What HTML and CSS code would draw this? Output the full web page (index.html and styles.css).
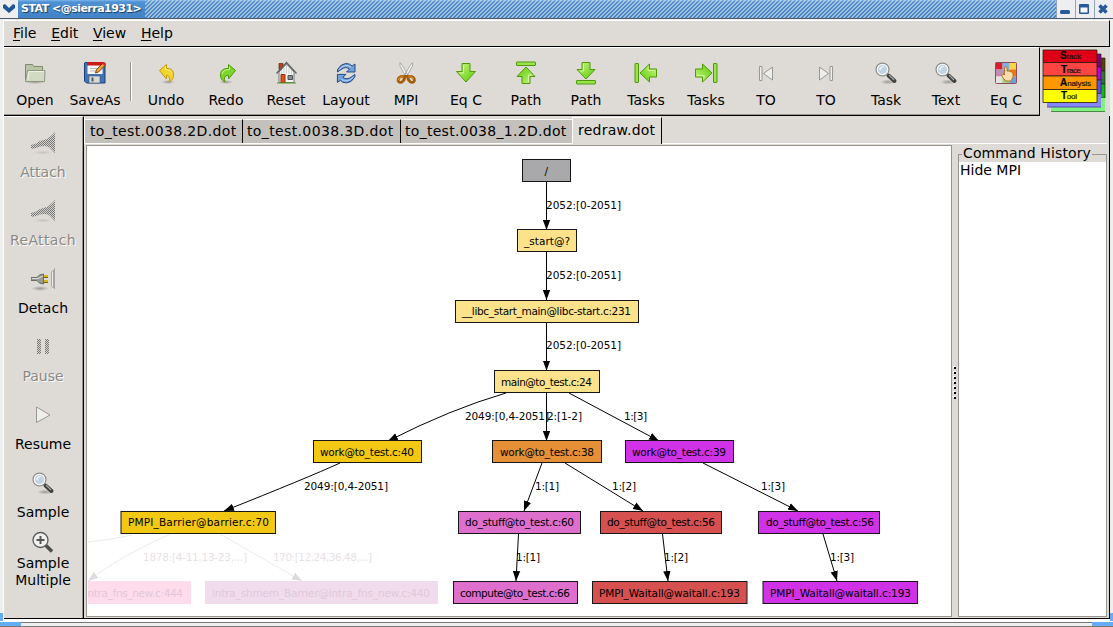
FILE: index.html
```html
<!DOCTYPE html>
<html lang="en">
<head>
<meta charset="utf-8">
<title>STAT</title>
<link rel="stylesheet" href="styles.css">
</head>
<body>
<svg class="defs" width="0" height="0">
  <defs>
    <linearGradient id="green" x1="0" y1="0" x2="1" y2="1"><stop offset="0" stop-color="#d0f58e"/><stop offset=".6" stop-color="#86dc35"/><stop offset="1" stop-color="#65c71b"/></linearGradient>
    <radialGradient id="shade"><stop offset="0" stop-color="#000" stop-opacity=".3"/><stop offset="1" stop-color="#000" stop-opacity="0"/></radialGradient>
    <pattern id="dither" width="2" height="2" patternUnits="userSpaceOnUse"><rect width="2" height="2" fill="#d5d3cf"/><path d="M0 0h1v1H0zM1 1h1v1H1z" fill="#777"/></pattern>
    <symbol id="down" viewBox="0 0 24 24"><path d="M8 2.500h8v8h5.500L12 21 2.500 10.500H8z" fill="url(#green)" stroke="#4e9a06"/><path d="M9.500 4v8H6" fill="none" stroke="#d6f7a4"/></symbol>
    <symbol id="bardown" viewBox="0 0 24 24"><path d="M8 1.500h8v7h5L12 18 3 8.500h5z" fill="url(#green)" stroke="#4e9a06"/><path d="M9.500 3v7H6.500" fill="none" stroke="#d6f7a4"/><rect x="2.500" y="19.500" width="19" height="3.500" rx=".5" fill="#9ae34f" stroke="#4e9a06"/></symbol>
    <symbol id="lens" viewBox="0 0 24 24"><ellipse cx="14" cy="21" rx="8" ry="2.500" fill="url(#shade)"/><path d="M14.500 14.500l6 5.500" stroke="#3d403d" stroke-width="4" stroke-linecap="round"/><path d="M15 14l5 5" stroke="#a5a8a3" stroke-width="1.200"/><circle cx="8.500" cy="8.500" r="6.400" fill="#c2d3e2" stroke="#878a86" stroke-width="1.300"/><circle cx="8.500" cy="8.500" r="5.200" fill="none" stroke="#f4f4f4" stroke-width="1.300"/><path d="M5 8.500c1-4 5-4 6-3-2 0-4 1-4.500 4z" fill="#eef4f8"/></symbol>
    <symbol id="plugoff" viewBox="0 0 24 24"><ellipse cx="12" cy="21.500" rx="9" ry="2" fill="url(#shade)" opacity=".4"/><path d="M0 14L5 12.500 9 10 14 8.500 17 7.500 21 4 24 1V22L21 19 18 16 14 15 9 15.500 5 17 0 18z" fill="url(#dither)"/></symbol>
    <symbol id="start" viewBox="0 0 24 24"><path d="M5.500 5.500h2.500v14H5.500zM18.500 6v13L9.500 12.500z" fill="#eeeeec" stroke="#969894"/></symbol>
  </defs>
</svg>
<div class="window">
  <header class="titlebar">
    <svg class="winmenu" viewBox="0 0 18 18"><path d="M3 5l2-1 4 4 4-4 2 1v3l-6 5-6-5z" fill="#1f5698"/></svg>
    <span class="title">STAT &lt;@sierra1931&gt;</span><i class="stripes"></i>
    <svg class="winbtns" viewBox="0 0 57 18"><path d="M0 0h57v18H0z" fill="#eeeef1"/><path d="M.5 0v18M19.500 0v18M38.500 0v18" stroke="#91a4bc"/><rect x="4" y="10" width="10" height="4" rx="1.500" fill="#265b99"/><path d="M24 4h8q1 0 1 1v8q0 1-1 1h-8q-1 0-1-1V5q0-1 1-1z" fill="#265b99"/><path d="M24.500 7.500h7v5h-7z" fill="#f7f7fb"/><path d="M43.500 5.500l7 7M50.500 5.500l-7 7" stroke="#265b99" stroke-width="3.500"/></svg>
  </header>
  <div class="frame">
    <nav class="menubar"><span><u>F</u>ile</span><span><u>E</u>dit</span><span><u>V</u>iew</span><span><u>H</u>elp</span></nav>
    <div class="toprow">
      <div class="toolbar">
        <div class="tool"><svg viewBox="0 0 24 24"><ellipse cx="12" cy="21" rx="11" ry="2" fill="url(#shade)"/><path d="M2.500 19.500V3.500h7l1.500 2h8.500v14z" fill="#b9c4a4" stroke="#808c6e"/><path d="M2.500 20.500L4.500 9.500H22l-.5 11z" fill="#d3dac4" stroke="#8e997c"/><path d="M5 19l1-8.500h15" fill="none" stroke="#edf0e5"/></svg><span>Open</span></div>
        <div class="tool"><svg viewBox="0 0 24 24"><path d="M2 1.500h18.500q1.500 0 1.500 1.500v19H3.500L1.500 20V2z" fill="#4274b6" stroke="#173f7c"/><path d="M4.500 2h15v11h-15z" fill="#f7f7f7"/><path d="M4 1h16v3.500H4z" fill="#ce1717"/><path d="M7 7.500h8M7 10h6" stroke="#bbb"/><path d="M6 15h11v7H6z" fill="#d7d9d6" stroke="#46566a" stroke-width=".6"/><path d="M8.500 16.500h2v4h-2z" fill="#555"/><path d="M12.500 12l1-3.500L20 2l2.500 2-7 7z" fill="#eaa33a" stroke="#814013"/><path d="M20 1l3 1.500-1 2.500-3-2z" fill="#dd2a20"/></svg><span>SaveAs</span></div>
        <i class="sep"></i>
        <div class="tool"><svg viewBox="0 0 24 24"><ellipse cx="14" cy="21" rx="7" ry="2" fill="url(#shade)"/><path d="M5.500 9.500l7-6v4q7-.5 7 6.500 0 5-4.500 7 1.500-3 0-5.500-1-1-2.500-1v3.500z" fill="#f3d62c" stroke="#c49a00"/><path d="M11.500 5.500v3l4 .5q2 1 2.500 4" stroke="#fff09a" fill="none"/></svg><span>Undo</span></div>
        <div class="tool"><svg viewBox="0 0 24 24"><ellipse cx="12" cy="21" rx="7" ry="2" fill="url(#shade)"/><path d="M21.500 9.500l-7-6v4q-8-.5-8 6.500 0 5 4.500 7-1.500-3 0-5.500 1-1 3.500-1v3.500z" fill="#7bd52a" stroke="#4e9a06"/><path d="M15.500 5.500v3l-4 .5q-3 1-3.500 4" stroke="#c9f69b" fill="none"/></svg><span>Redo</span></div>
        <div class="tool"><svg viewBox="0 0 24 24"><path d="M5 2.500h4v6H5z" fill="#b8431a" stroke="#652006" stroke-width=".7"/><path d="M5 11l7.500-8 7.500 8v10.500H5z" fill="#f3f3f1" stroke="#777"/><path d="M2.500 12.500L12.500 1.500l10 11" fill="none" stroke="#5c625e" stroke-width="1.300"/><path d="M10 6.500v6M12.500 4v8.500M15 6.500v6M17.500 9v4M7.500 9v4" stroke="#c9cbc9" stroke-width=".9"/><path d="M7 13.500h4v8H7z" fill="#dc5422" stroke="#93310c"/><path d="M14 14.500h4.500v4H14z" fill="#8a9093" stroke="#4c5154"/><path d="M3 22h19" stroke="#4e9a23"/></svg><span>Reset</span></div>
        <div class="tool"><svg viewBox="0 0 24 24"><g id="arc"><path d="M3.500 11V8.500Q7 2.500 12 2.500q4 0 6 2.500l3-2v8h-8.500l3-3q-4-3-8.500.5z" fill="#74a1d8" stroke="#204a87"/><path d="M5 8.500q6-6.500 12-2.500" fill="none" stroke="#bad5f2"/></g><use href="#arc" transform="rotate(180 12.200 12.200)"/></svg><span>Layout</span></div>
        <div class="tool"><svg viewBox="0 0 24 24"><path d="M6 1.500L8 4l6.500 11-2 1.500L6 5zM18.500 1.500L16.500 4 10 15l2 1.500L18.500 5z" fill="#f6f6f6" stroke="#999b97" stroke-width=".8"/><path d="M10.500 15.500l-4 .2q-2.800 1-2.300 4.300 1 2.200 3.800 1 2.700-2 2.700-5zM13.500 15.500l4 .2q3.300 1 2.800 4.300-1 2.200-3.800 1-2.700-2-2.700-5z" fill="#e0d5c6" stroke="#a55c08" stroke-width="2.800"/><path d="M9.500 15.700l-3.500.6q-2 1-1.800 3M14.500 15.700l3.500.6q1.500 1 1.800 2" fill="none" stroke="#e59a2c"/></svg><span>MPI</span></div>
        <div class="tool"><svg><use href="#down"/></svg><span>Eq C</span></div>
        <div class="tool"><svg viewBox="0 0 24 24"><use href="#bardown" transform="rotate(180 12 12)"/></svg><span>Path</span></div>
        <div class="tool"><svg><use href="#bardown"/></svg><span>Path</span></div>
        <div class="tool"><svg viewBox="0 0 24 24"><use href="#bardown" transform="rotate(90 12 12)"/></svg><span>Tasks</span></div>
        <div class="tool"><svg viewBox="0 0 24 24"><use href="#bardown" transform="rotate(-90 12 12)"/></svg><span>Tasks</span></div>
        <div class="tool"><svg viewBox="0 0 24 24"><use href="#start"/></svg><span>TO</span></div>
        <div class="tool"><svg viewBox="0 0 24 24"><use href="#start" transform="translate(24 0) scale(-1 1)"/></svg><span>TO</span></div>
        <div class="tool"><svg><use href="#lens"/></svg><span>Task</span></div>
        <div class="tool"><svg><use href="#lens"/></svg><span>Text</span></div>
        <div class="tool"><svg viewBox="0 0 24 24"><path d="M1.500 1.500h7v7h-7z" fill="#d91f2b"/><path d="M8.500 1.500h7v7h-7z" fill="#80aee0"/><path d="M15.500 1.500h7v7h-7z" fill="#f7d740"/><path d="M1.500 8.500h7v7h-7z" fill="#c48bb0"/><path d="M8.500 8.500h7v7h-7z" fill="#729fcf"/><path d="M15.500 8.500h7v7h-7z" fill="#f57900"/><path d="M1.500 15.500h7v7h-7z" fill="#e4e3e2"/><path d="M8.500 15.500h7v7h-7z" fill="#a3cf76"/><path d="M15.500 15.500h7v7h-7z" fill="#6da2dc"/><rect x="1.500" y="1.500" width="21" height="21" rx="1" fill="none" stroke="#8b4e61"/><path d="M10.500 14V6.500q1.500-1.500 2.500 0V10h1.500l1.500.5 1.500.5 1.500 1v4l-2 4h-5l-3-3-1.500-3 1-1z" fill="#fcdcab" stroke="#b56b21" stroke-width=".9"/></svg><span>Eq C</span></div>
      </div>
      <svg class="logo" viewBox="1040 47 70 68">
        <g stroke="#222" stroke-width=".7"><path d="M1051 58h54v13h-54z" fill="#554400"/><path d="M1051 71h54v13h-54z" fill="#2a7a2e"/><path d="M1051 84h54v14h-54z" fill="#13b513"/></g><path d="M1051 98h54v13.500h-54z" fill="#80f080"/><path d="M1051 111.500h54" stroke="#488a48"/>
        <g stroke="#222" stroke-width=".7"><path d="M1047 54h54v13h-54z" fill="#800080"/><path d="M1047 67h54v13h-54z" fill="#b700ee"/><path d="M1047 80h54v13.500h-54z" fill="#624ff5"/></g><path d="M1047 94h54v13h-54z" fill="#8585ff"/><path d="M1047 107h54" stroke="#4f4fa5"/>
        <g stroke="#2b160b" stroke-width=".8"><path d="M1043 50h54v12.500h-54z" fill="#df0018"/><path d="M1043 62.500h54V76h-54z" fill="#ff4444"/><path d="M1043 76h54v13.500h-54z" fill="#ff9800"/><path d="M1043 89.500h54v13h-54z" fill="#ffff00"/></g>
        <g class="logotext"><text x="1060" y="59" textLength="21"><tspan>S</tspan>tack</text><text x="1061" y="73" textLength="20"><tspan>T</tspan>race</text><text x="1060" y="86" textLength="31"><tspan>A</tspan>nalysis</text><text x="1061" y="99" textLength="16"><tspan>T</tspan>ool</text></g>
      </svg>
    </div>
    <main class="work">
      <aside class="sidebar">
        <div class="side off"><svg><use href="#plugoff"/></svg><span>Attach</span></div>
        <div class="side off"><svg><use href="#plugoff"/></svg><span class="wide">ReAttach</span></div>
        <div class="side"><svg viewBox="0 0 24 24"><ellipse cx="9" cy="21.500" rx="9" ry="2.500" fill="url(#shade)"/><path d="M0 10.500h6Q8 7 12.500 7v10Q8 17 6 13.500H0z" fill="#989b96" stroke="#555753" stroke-width=".8"/><path d="M1 11.500h6l5-2.500" stroke="#ddd" fill="none"/><path d="M13 9.500h4M13 14.500h4" stroke="#796400" stroke-width="3"/><path d="M13 9h4M13 14h4" stroke="#f2d61f" stroke-width="1.500"/><path d="M23.500 1v21M20.500 5v14l2 2V3z" fill="#eee" stroke="#a5a7a2"/></svg><span>Detach</span></div>
        <div class="side off"><svg viewBox="0 0 24 24"><path d="M6 4h4v15H6zM14 4h4v15h-4z" fill="url(#dither)"/></svg><span>Pause</span></div>
        <div class="side"><svg viewBox="0 0 24 24"><path d="M5.500 4v15.500L19 12z" fill="#eeeeec" stroke="#969894"/></svg><span>Resume</span></div>
        <div class="side"><svg><use href="#lens"/></svg><span>Sample</span></div>
        <div class="side last"><svg viewBox="0 0 24 24"><path d="M15 14.500l6 6" stroke="#4b4e4a" stroke-width="3.500"/><circle cx="9.500" cy="9" r="7.500" fill="#f1f1ef" stroke="#5a5d59" stroke-width="1.300"/><path d="M9.500 5v8M5.500 9h8" stroke="#555" stroke-width="2"/></svg><span>Sample<br>Multiple</span></div>
      </aside>
      <section class="book">
        <div class="tabs"><span class="t1">to_test.0038.2D.dot</span><span class="t2">to_test.0038.3D.dot</span><span class="t3">to_test.0038_1.2D.dot</span><span class="active">redraw.dot</span></div>
        <div class="panes">
          <div class="canvas"><svg class="graph" viewBox="87 146 864 470">
            <defs><marker id="head" viewBox="0 0 10 8" refX="10" refY="4" markerWidth="10" markerHeight="8" markerUnits="userSpaceOnUse" orient="auto"><path d="M0 .3L10 4 0 7.700z"/></marker>
            <marker id="fadehead" viewBox="0 0 10 8" refX="10" refY="4" markerWidth="10" markerHeight="8" markerUnits="userSpaceOnUse" orient="auto"><path d="M0 .3L10 4 0 7.700z" fill="#dcdadd"/></marker></defs>
            <g class="edges">
              <path d="M546.500 182V230"/><path d="M546.500 252V300"/><path d="M546.500 322V370.500"/><path d="M546.500 393V441"/>
              <path d="M506 393Q451 409 388 441"/><path d="M569 393L659 441"/><path d="M340 463Q307 478 224 511"/>
              <path d="M542 463L524 511"/><path d="M565 463L643 511"/><path d="M703 463L798 511"/>
              <path d="M518.500 534L516 581"/><path d="M662.500 534L668 581"/><path d="M823 534L837 581"/>
            </g>
            <g class="edges faded"><path class="nohead" d="M88 542Q111 540 132 535"/><path d="M170 534Q122 555 88 581"/><path d="M220 534L302 581"/></g>
            <g class="nodes">
              <rect x="522.500" y="159.500" width="48" height="22" fill="#a9a9ab"/><rect x="517.500" y="229.500" width="59" height="22" fill="#fce28b"/><rect x="455.500" y="300.500" width="183" height="22" fill="#fce28b"/><rect x="494.500" y="370.500" width="105" height="22" fill="#fce28b"/>
              <rect x="313.500" y="440.500" width="108" height="22" fill="#f3c813"/><rect x="492.500" y="440.500" width="109" height="22" fill="#e58f36"/><rect x="625.500" y="440.500" width="108" height="22" fill="#cf32e7"/>
              <rect x="121" y="511.500" width="154.500" height="22" fill="#f3c813"/><rect x="458.500" y="511.500" width="122" height="22" fill="#de6fcd"/><rect x="600.500" y="511.500" width="121" height="22" fill="#d65050"/><rect x="758.500" y="511.500" width="121" height="22" fill="#cf32e7"/>
              <rect x="453.500" y="581.500" width="124" height="22" fill="#de6fcd"/><rect x="592.500" y="581.500" width="154.500" height="22" fill="#d65050"/><rect x="763" y="581.500" width="154.500" height="22" fill="#cf32e7"/>
            </g>
            <path d="M88 581h103v23H88z" fill="#ffdceb"/><path d="M205 581h233v23H205z" fill="#f0dced"/>
            <g class="labels">
              <text x="544.500" y="174.500">/</text><text x="524" y="245" textLength="46">_start@?</text><text x="462" y="315" textLength="169">__libc_start_main@libc-start.c:231</text><text x="501" y="386" textLength="91">main@to_test.c:24</text>
              <text x="320" y="456" textLength="94">work@to_test.c:40</text><text x="500" y="456" textLength="94">work@to_test.c:38</text><text x="632" y="456" textLength="94">work@to_test.c:39</text>
              <text x="128" y="526" textLength="141">PMPI_Barrier@barrier.c:70</text><text x="465" y="526" textLength="109">do_stuff@to_test.c:60</text><text x="607" y="526" textLength="108">do_stuff@to_test.c:56</text><text x="766" y="526" textLength="108">do_stuff@to_test.c:56</text>
              <text x="460" y="597" textLength="110">compute@to_test.c:66</text><text x="599" y="597" textLength="141">PMPI_Waitall@waitall.c:193</text><text x="770" y="597" textLength="141">PMPI_Waitall@waitall.c:193</text>
              <text x="546" y="209" textLength="75">2052:[0-2051]</text><text x="546" y="279" textLength="75">2052:[0-2051]</text><text x="546" y="349" textLength="75">2052:[0-2051]</text>
              <text x="465" y="420" textLength="84">2049:[0,4-2051]</text><text x="547" y="420" textLength="35">2:[1-2]</text><text x="624" y="420" textLength="23">1:[3]</text><text x="304" y="490" textLength="84">2049:[0,4-2051]</text>
              <text x="535" y="490" textLength="24">1:[1]</text><text x="612" y="490" textLength="24">1:[2]</text><text x="761" y="490" textLength="24">1:[3]</text><text x="516" y="561" textLength="24">1:[1]</text><text x="664" y="561" textLength="24">1:[2]</text><text x="830" y="561" textLength="24">1:[3]</text>
              <g class="fade"><text x="143" y="561" textLength="104">1878:[4-11,13-23,...]</text><text x="273" y="561" textLength="99">170:[12,24,36,48,...]</text></g><g class="fadenode"><text x="87.500" y="597" textLength="95.500">ntra_fns_new.c:444</text><text x="212" y="597" textLength="218">intra_shmem_Barrier@intra_fns_new.c:440</text></g>
            </g>
          </svg></div>
          <div class="grip"><i></i><i></i><i></i><i></i><i></i><i></i><i></i></div>
          <fieldset class="history"><legend>Command History</legend><div class="list">Hide MPI</div></fieldset>
        </div>
      </section>
    </main>
  </div>
  <footer class="resize"><i></i><i></i></footer>
</div>
</body>
</html>
```

FILE: styles.css
```css
* { box-sizing: border-box; }
body { margin: 0; font: 14px/17px "DejaVu Sans", sans-serif; color: #000; background: #dedbd6; overflow: hidden; }
svg { display: block; }
.defs { position: absolute; }
.window { width: 1113px; height: 627px; display: flex; flex-direction: column; background: #eef0f0; }
.titlebar { height: 19px; display: flex; align-items: stretch; background: linear-gradient(#7fb6ea 0, #4f91d2 2px, #4384c8 17px); border-bottom: 1px solid #4b5867; }
.winmenu { width: 18px; height: 18px; background: #eeeef1; }
.title { padding-left: 3px; width: 127px; font: bold 11px/18px "DejaVu Sans", sans-serif; letter-spacing: -.52px; color: #fff; text-shadow: 1px 1px 1px #173e6c; white-space: nowrap; }
.stripes { flex: 1; background: repeating-linear-gradient(135deg, rgba(225,228,225,.6) 0 1.1px, transparent 1.1px 2.8284px); }
.winbtns { width: 57px; height: 18px; }
.frame { flex: 1; margin: 1px 3px 0; background: #dedbd6; border-left: 1px solid #fff; display: flex; flex-direction: column; min-height: 0; }
.menubar { height: 27px; flex: none; display: flex; gap: 14.7px; padding: 4px 9px; border-top: 1px solid #fff; border-bottom: 1px solid #000; border-right: 1px solid #000; }
.menubar u { text-underline-offset: 2px; }
.toprow { height: 69px; flex: none; display: flex; }
.toolbar { width: 1036px; display: flex; border-top: 1px solid #fff; border-right: 1px solid #000; border-bottom: 1px solid #000; box-shadow: inset 0 -1px #98948f; }
.tool { width: 60px; flex: none; display: flex; flex-direction: column; align-items: center; padding-top: 13px; white-space: nowrap; }
.tool:first-child { margin-left: 1px; }
.tool svg, .side svg { width: 24px; height: 24px; flex: none; }
.tool span { margin-top: 7px; }
.sep { width: 2px; height: 39px; margin: 14px 4px 0 5px; border-left: 1px solid #98948f; border-right: 1px solid #fff; }
.logo { width: 70px; height: 68px; }
.logotext { font: 8px "Liberation Sans", sans-serif; fill: #25120b; stroke: #25120b; stroke-width: .2; }
.logotext tspan { font-weight: bold; font-size: 10px; fill: #000; }
.work { flex: 1; display: flex; min-height: 0; border-bottom: 1px solid #000; border-right: 1px solid #000; }
.sidebar { width: 80px; flex: none; border-top: 1px solid #fff; border-right: 1px solid #000; padding-top: 14px; box-shadow: inset -1px 0 #98948f; }
.side { height: 68px; width: 78px; display: flex; flex-direction: column; align-items: center; text-align: center; }
.side span { margin-top: 9px; }
.side .wide { letter-spacing: .35px; }
.side.last { margin-top: -8px; }
.side.last span { margin-top: 0; }
.off span { color: #8b8985; text-shadow: 1px 1px #fff; }
.book { flex: 1; min-width: 0; display: flex; flex-direction: column; padding: 1px 2px 1px 2px; }
.tabs { height: 27px; flex: none; display: flex; align-items: flex-end; border-bottom: 1px solid #fff; border-left: 1px solid #fff; margin-left: -2px; }
.tabs span { height: 24px; background: #c4c0bb; padding: 3px 0 0 5px; border-right: 1px solid #000; border-top: 1px solid #fff; letter-spacing: .37px; white-space: nowrap; }
.tabs .t2, .tabs .t3 { padding-left: 4px; }
.t1, .t2 { width: 158px; }
.t3 { width: 171px; }
.tabs .t3 { border-right: 0; letter-spacing: .29px; }
.tabs .active { width: 90px; height: 27px; background: #dedbd6; border-left: 1px solid #fff; padding: 4px 0 0 5px; margin-bottom: -1px; letter-spacing: .25px; }
.panes { flex: 1; min-height: 0; display: flex; padding-top: 1px; }
.canvas { width: 866px; flex: none; background: #fff; border: 1px solid #98948f; overflow: hidden; }
.graph { width: 864px; height: 470px; }
.edges { fill: none; stroke: #000; stroke-width: 1; }
.edges path { marker-end: url(#head); }
.faded { stroke: #eee9ed; }
.faded path { marker-end: url(#fadehead); }
.faded .nohead { marker-end: none; }
.nodes { stroke: #161616; }
.labels { font: 10.5px "DejaVu Sans", sans-serif; }
.fade { fill: #e7e1e5; }
.fadenode { fill: #e0c8d9; }
.grip { width: 6px; flex: none; display: flex; flex-direction: column; align-items: center; gap: 3px; padding-top: 222px; }
.grip i { width: 2px; height: 2px; background: #000; box-shadow: -1px -1px #fff; }
.history { position: relative; flex: 1; min-width: 0; margin: 9px 0 0; padding: 7px 0 0; border: 1px solid #98948f; }
.history legend { position: absolute; top: -10px; left: 3px; padding: 0 1px; background: #dedbd6; letter-spacing: .12px; white-space: nowrap; }
.list { height: 454px; padding-left: 1px; background: #fff; }
.resize { height: 8px; flex: none; display: flex; justify-content: space-between; background: linear-gradient(#fff 0 3px, #777 3px 4px, #eee 4px 7px, #777 7px 8px); }
.resize i { width: 21px; height: 4px; margin-top: 3px; background: #64adf5; box-shadow: -18px -9px #64adf5, -18px -5px #64adf5; }
.resize i:last-child { box-shadow: 18px -9px #64adf5, 18px -5px #64adf5; }
```
